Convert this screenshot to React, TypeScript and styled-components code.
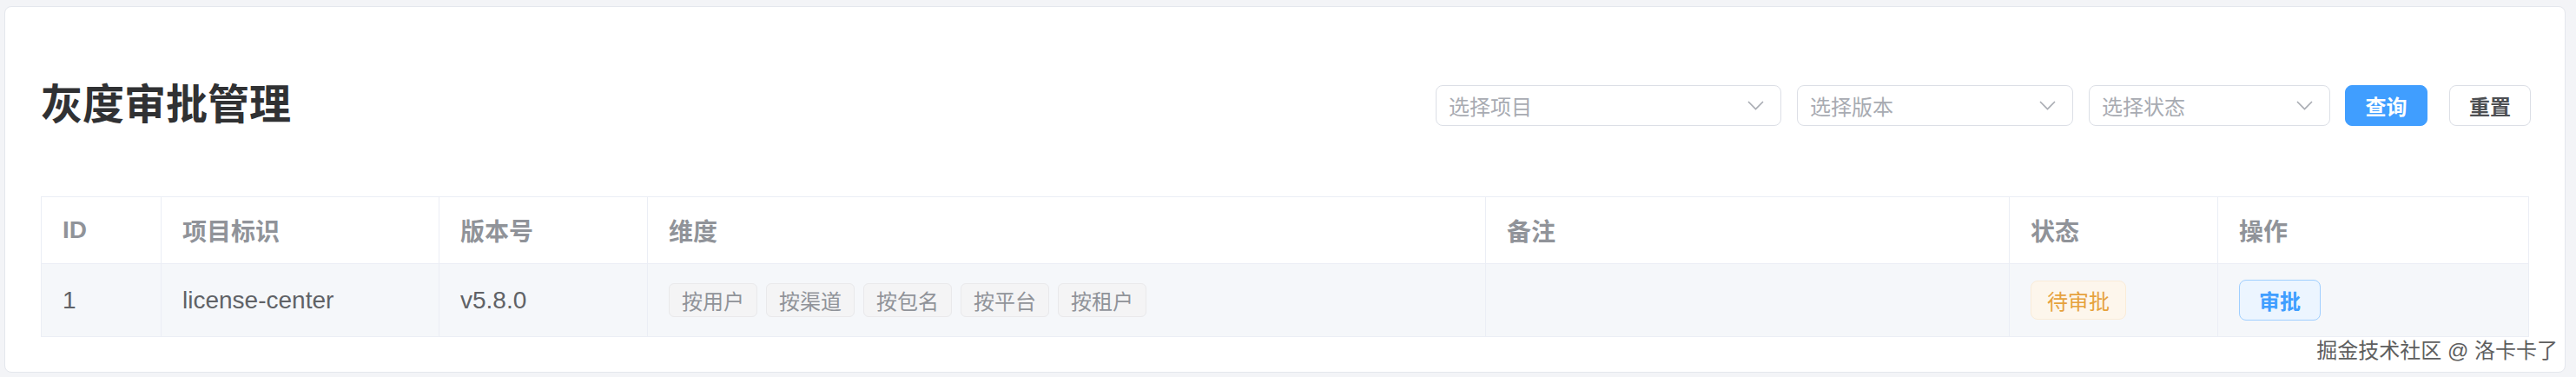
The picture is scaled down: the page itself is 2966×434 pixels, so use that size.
import React from "react";
import styled, { createGlobalStyle } from "styled-components";

const GlobalStyle = createGlobalStyle`
  html, body {
    margin: 0;
    padding: 0;
    background: #f3f4f7;
    font-family: "Liberation Sans", "Noto Sans CJK SC", sans-serif;
  }
  * { box-sizing: border-box; }
`;

const Page = styled.div`
  padding: 7px 12px 6px 5px;
`;

const Card = styled.section`
  position: relative;
  background: #ffffff;
  border: 1px solid #e4e7ed;
  border-radius: 8px;
  padding: 77px 41px 40px 41px;
`;

const HeaderRow = styled.div`
  display: flex;
  align-items: center;
  justify-content: space-between;
  height: 72px;
`;

const Title = styled.h1`
  margin: 0;
  font-size: 48px;
  line-height: 72px;
  font-weight: 700;
  color: #303133;
  letter-spacing: 0;
`;

const Toolbar = styled.div`
  display: flex;
  align-items: center;
  margin-right: -2px;
`;

const Select = styled.div<{ $w: number }>`
  width: ${(p) => p.$w}px;
  height: 47px;
  margin-right: 18px;
  display: flex;
  align-items: center;
  justify-content: space-between;
  padding: 0 19px 0 14px;
  border: 1px solid #dcdfe6;
  border-radius: 8px;
  background: #fff;
  font-size: 24px;
  color: #a8abb2;
`;

const Button = styled.button<{ $primary?: boolean; $gap?: number }>`
  height: 47px;
  width: ${(p) => (p.$primary ? 95 : 94)}px;
  margin-left: ${(p) => p.$gap ?? 0}px;
  border-radius: 8px;
  border: 1px solid ${(p) => (p.$primary ? "#409eff" : "#dcdfe6")};
  background: ${(p) => (p.$primary ? "#409eff" : "#fff")};
  color: ${(p) => (p.$primary ? "#fff" : "#4d4f53")};
  font-family: inherit;
  font-size: 24px;
  font-weight: 700;
  padding: 0;
`;

const Table = styled.table`
  margin-top: 69px;
  width: 100%;
  table-layout: fixed;
  border-collapse: collapse;
  border: 1px solid #ebeef5;
`;

const HeadCell = styled.th`
  height: 77px;
  padding: 0 24px;
  text-align: left;
  font-size: 28px;
  font-weight: 700;
  color: #909399;
  background: #fff;
  border-right: 1px solid #ebeef5;
  border-bottom: 1px solid #ebeef5;
  vertical-align: middle;
`;

const BodyRow = styled.tr`
  background: #f5f7fa;
`;

const Cell = styled.td`
  height: 84px;
  padding: 0 24px;
  font-size: 28px;
  color: #606266;
  border-right: 1px solid #ebeef5;
  vertical-align: middle;
  white-space: nowrap;
`;

const Tags = styled.div`
  display: flex;
  gap: 10px;
`;

const DimTag = styled.span`
  display: inline-flex;
  align-items: center;
  height: 39px;
  padding: 0 14px;
  font-size: 24px;
  color: #909399;
  background: #f4f4f5;
  border: 1px solid #e9e9eb;
  border-radius: 6px;
`;

const StatusTag = styled.span`
  display: inline-flex;
  align-items: center;
  height: 45px;
  padding: 0 18px;
  font-size: 24px;
  color: #e6a23c;
  background: #fdf6ec;
  border: 1px solid #faecd8;
  border-radius: 8px;
`;

const ApproveButton = styled.button`
  height: 47px;
  width: 94px;
  padding: 0;
  font-family: inherit;
  font-size: 24px;
  font-weight: 700;
  color: #409eff;
  background: #ecf5ff;
  border: 1px solid #a0cfff;
  border-radius: 8px;
`;

const Watermark = styled.div`
  position: absolute;
  right: 8px;
  bottom: 9px;
  font-size: 24px;
  color: #5e5e5e;
  text-shadow: 1px 1px 0 #ffffff, -1px -1px 0 #ffffff;
  white-space: nowrap;
`;

const Chevron = () => (
  <svg width="19" height="11" viewBox="0 0 19 11" fill="none">
    <path d="M1 1 L9.5 9.5 L18 1" stroke="#a8abb2" strokeWidth="1.6" />
  </svg>
);

const columns = [
  { key: "id", title: "ID", w: 138 },
  { key: "project", title: "项目标识", w: 320 },
  { key: "version", title: "版本号", w: 240 },
  { key: "dim", title: "维度", w: 965 },
  { key: "remark", title: "备注", w: 603 },
  { key: "status", title: "状态", w: 240 },
  { key: "op", title: "操作", w: 358 },
];

const dims = ["按用户", "按渠道", "按包名", "按平台", "按租户"];

export default function App() {
  return (
    <>
      <GlobalStyle />
      <Page>
        <Card>
          <HeaderRow>
            <Title>灰度审批管理</Title>
            <Toolbar>
              <Select $w={398}>
                <span>选择项目</span>
                <Chevron />
              </Select>
              <Select $w={318}>
                <span>选择版本</span>
                <Chevron />
              </Select>
              <Select $w={278}>
                <span>选择状态</span>
                <Chevron />
              </Select>
              <Button $primary $gap={-1}>查询</Button>
              <Button $gap={25}>重置</Button>
            </Toolbar>
          </HeaderRow>
          <Table>
            <colgroup>
              {columns.map((c) => (
                <col key={c.key} style={{ width: c.w }} />
              ))}
            </colgroup>
            <thead>
              <tr>
                {columns.map((c) => (
                  <HeadCell key={c.key}>{c.title}</HeadCell>
                ))}
              </tr>
            </thead>
            <tbody>
              <BodyRow>
                <Cell>1</Cell>
                <Cell>license-center</Cell>
                <Cell>v5.8.0</Cell>
                <Cell>
                  <Tags>
                    {dims.map((d) => (
                      <DimTag key={d}>{d}</DimTag>
                    ))}
                  </Tags>
                </Cell>
                <Cell></Cell>
                <Cell>
                  <StatusTag>待审批</StatusTag>
                </Cell>
                <Cell>
                  <ApproveButton>审批</ApproveButton>
                </Cell>
              </BodyRow>
            </tbody>
          </Table>
          <Watermark>掘金技术社区 @ 洛卡卡了</Watermark>
        </Card>
      </Page>
    </>
  );
}
